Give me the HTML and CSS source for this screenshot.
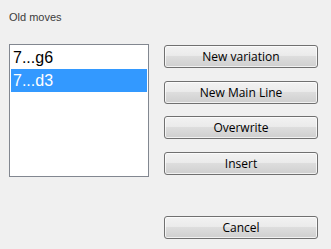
FILE: index.html
```html
<!DOCTYPE html>
<html>
<head>
<meta charset="utf-8">
<link rel="stylesheet" href="styles.css">
</head>
<body>
<div class="dialog">
  <div class="left">
    <div class="label">Old moves</div>
    <div class="listbox">
      <div class="item">7...g6</div>
      <div class="item selected">7...d3</div>
    </div>
  </div>
  <div class="buttons">
    <button class="btn">New variation</button>
    <button class="btn">New Main Line</button>
    <button class="btn">Overwrite</button>
    <button class="btn">Insert</button>
    <button class="btn cancel">Cancel</button>
  </div>
</div>
</body>
</html>
```
FILE: styles.css
```css
html, body {
  margin: 0;
  padding: 0;
  background: #f0f0f0;
  width: 331px;
  height: 249px;
  overflow: hidden;
}
.dialog {
  display: flex;
  padding: 0 0 0 9px;
}
.left {
  display: flex;
  flex-direction: column;
  width: 140px;
}
.label {
  font-family: "Liberation Sans", Arial, sans-serif;
  font-size: 11px;
  color: #3c3c3c;
  padding-top: 11px;
  height: 22px;
  line-height: 13px;
  box-sizing: border-box;
  margin-bottom: 22px;
}
.listbox {
  width: 140px;
  height: 133px;
  box-sizing: border-box;
  border: 1px solid #828790;
  background: #fff;
  padding: 1px;
}
.item {
  font-family: "Liberation Sans", Arial, sans-serif;
  font-size: 16px;
  height: 23px;
  line-height: 23px;
  padding-left: 2px;
  color: #000;
}
.item.selected {
  background: #3399ff;
  color: #fff;
}
.buttons {
  display: flex;
  flex-direction: column;
  margin-left: 15px;
  padding-top: 45px;
  gap: 12.67px;
}
.btn {
  width: 154px;
  height: 23px;
  box-sizing: border-box;
  border: 1px solid #707070;
  border-radius: 3px;
  background: linear-gradient(to bottom, #f2f2f2 0%, #ebebeb 45%, #dddddd 50%, #cfcfcf 100%);
  box-shadow: inset 0 0 0 1px rgba(255,255,255,0.7);
  font-family: "Open Sans", "Noto Sans", sans-serif;
  font-size: 12px;
  color: #000;
  padding: 0;
  margin: 0;
  line-height: 19px;
}
.btn.cancel {
  margin-top: 28.33px;
}
```
